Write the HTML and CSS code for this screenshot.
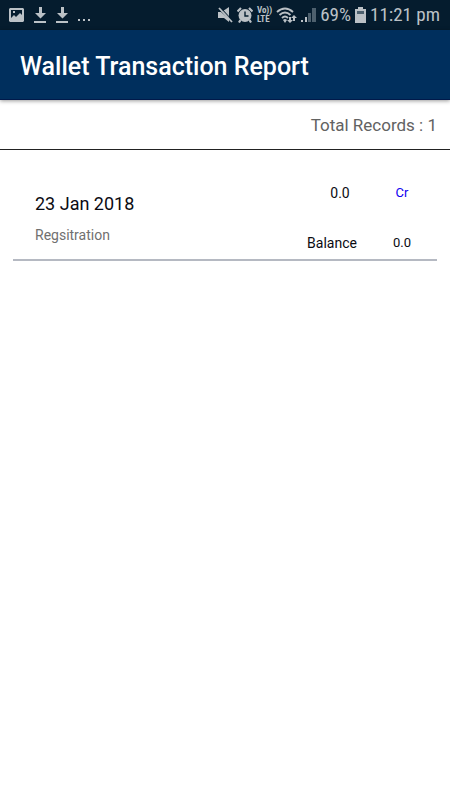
FILE: index.html
```html
<!DOCTYPE html>
<html lang="en">
<head>
<meta charset="utf-8">
<meta name="viewport" content="width=device-width, initial-scale=1">
<title>Wallet Transaction Report</title>
<link rel="stylesheet" href="styles.css">
</head>
<body>
<div class="status">
  <div class="status-left">
    <svg width="15" height="16" viewBox="0 0 15 16"><path fill="currentColor" fill-rule="evenodd" d="M1 1h13l1 1v12l-1 1H1l-1-1V2zM2 3v8l3-3 2 2 4-4 2 2V3zM4 4h2v2H4z"/></svg>
    <svg width="12" height="16" viewBox="0 0 12 16"><path fill="currentColor" d="M5 0h3v6h4l-5.500 5.500L1 6h4zM0 14h12v2H0z"/></svg>
    <svg width="12" height="16" viewBox="0 0 12 16"><path fill="currentColor" d="M5 0h3v6h4l-5.500 5.500L1 6h4zM0 14h12v2H0z"/></svg>
    <svg width="14" height="16" viewBox="0 0 14 16"><path fill="currentColor" d="M0 12h2v2H0zM5 12h2v2H5zM10 12h2v2h-2z"/></svg>
  </div>
  <div class="status-right">
    <svg width="15" height="16" viewBox="0 0 15 16"><path fill="currentColor" d="M0 5h3l8 7v3l-5-4H0zM5 4l6-4v10z"/><path stroke="#051c2e" stroke-width="1" d="M3 1l12 13"/><path stroke="currentColor" stroke-width="1.800" d="M1 1l13 14"/></svg>
    <svg width="16" height="16" viewBox="0 0 16 16"><circle cx="8" cy="8.500" r="6.500" fill="currentColor"/><path fill="none" stroke="#051c2e" stroke-width="1.400" d="M8 4.500V9h3.500"/><path stroke="currentColor" stroke-width="2.200" d="M.500 4.500L4 1M15.500 4.500L12 1M3.500 13L2 15.500M12.500 13l1.500 2.500"/></svg>
    <span class="volte"><span>Vo))</span><span>LTE</span></span>
    <svg width="21" height="16" viewBox="0 0 21 16"><g fill="none" stroke="currentColor" stroke-width="1.900"><path d="M1 5q8-7 16 0M3.500 8q5.500-5 11 0M6 11q3-3 6 0"/></g><path fill="currentColor" d="M7 13q2-2 4 0l-2 3zM14 16l-3-3h2v-3h2v3h2zM18 8l3 3h-2v3h-2v-3h-2z"/></svg>
    <svg width="15" height="16" viewBox="0 0 15 16"><path fill="currentColor" d="M0 13h2v2H0zM4 10h2v5H4z"/><path fill="#4d606e" d="M7 6h3v9H7zM11 1h4v14h-4z"/></svg>
    <span>69%</span>
    <svg width="11" height="16" viewBox="0 0 11 16"><path fill="currentColor" d="M3 0h5v2h3v14H0V2h3z"/><path fill="#4d606e" d="M2 4h7v3H2z"/></svg>
    <span>11:21 pm</span>
  </div>
</div>
<header class="appbar"><h1>Wallet Transaction Report</h1></header>
<main>
  <p class="summary">Total Records : 1</p>
  <ul class="list">
    <li class="item">
      <div class="details">
        <span class="date">23 Jan 2018</span>
        <span class="note">Regsitration</span>
      </div>
      <div class="amounts">
        <span class="value">0.0</span>
        <span class="credit">Cr</span>
        <span>Balance</span>
        <span class="small">0.0</span>
      </div>
    </li>
  </ul>
</main>
</body>
</html>
```

FILE: styles.css
```css
* { box-sizing: border-box; }
body {
  margin: 0;
  background: #fff;
  color: #0b0b12;
  font-family: Roboto, "Noto Sans", sans-serif;
}
.status {
  display: flex;
  justify-content: space-between;
  align-items: center;
  height: 30px;
  padding: 0 10px 0 9px;
  background: #051c2e;
  color: #bbc1c6;
}
.status svg { display: block; flex: none; }
.status-left { display: flex; gap: 10px; }
.status-right {
  display: flex;
  align-items: center;
  gap: 4px;
  font-family: "Roboto Condensed", Roboto, sans-serif;
  font-size: 19px;
  line-height: 30px;
  white-space: nowrap;
}
.volte {
  display: flex;
  flex-direction: column;
  font-size: 9px;
  font-weight: 700;
  line-height: 9px;
}
.appbar {
  position: relative;
  height: 70px;
  padding: 22px 20px 0;
  background: #002f5d;
  border-bottom: 1px solid #00194a;
  box-shadow: 0 1px 4px rgba(0, 0, 0, 0.4);
  color: #fff;
}
.appbar h1 {
  margin: 0;
  font-size: 25px;
  font-weight: 500;
  line-height: 30px;
}
.summary {
  margin: 0;
  padding: 13px 13px 12px;
  border-bottom: 1px solid #222;
  color: #626262;
  font-size: 17px;
  line-height: 24px;
  text-align: right;
}
.list {
  margin: 0;
  padding: 0 13px;
  list-style: none;
}
.item {
  display: flex;
  justify-content: space-between;
  align-items: flex-end;
  padding: 31px 0 4px 22px;
  border-bottom: 2px solid #b5b9c2;
}
.details {
  display: flex;
  flex-direction: column;
  gap: 9px;
  padding-bottom: 10px;
}
.date { font-size: 18px; line-height: 24px; }
.note { color: #707070; font-size: 14px; line-height: 20px; }
.amounts {
  display: grid;
  grid-template-columns: 70px 70px;
  row-gap: 26px;
  font-size: 14px;
  line-height: 24px;
  text-align: center;
}
.amounts .value { padding-left: 16px; }
.amounts .credit { color: #0d00f0; font-size: 13px; }
.amounts .small { font-size: 13px; }
```
